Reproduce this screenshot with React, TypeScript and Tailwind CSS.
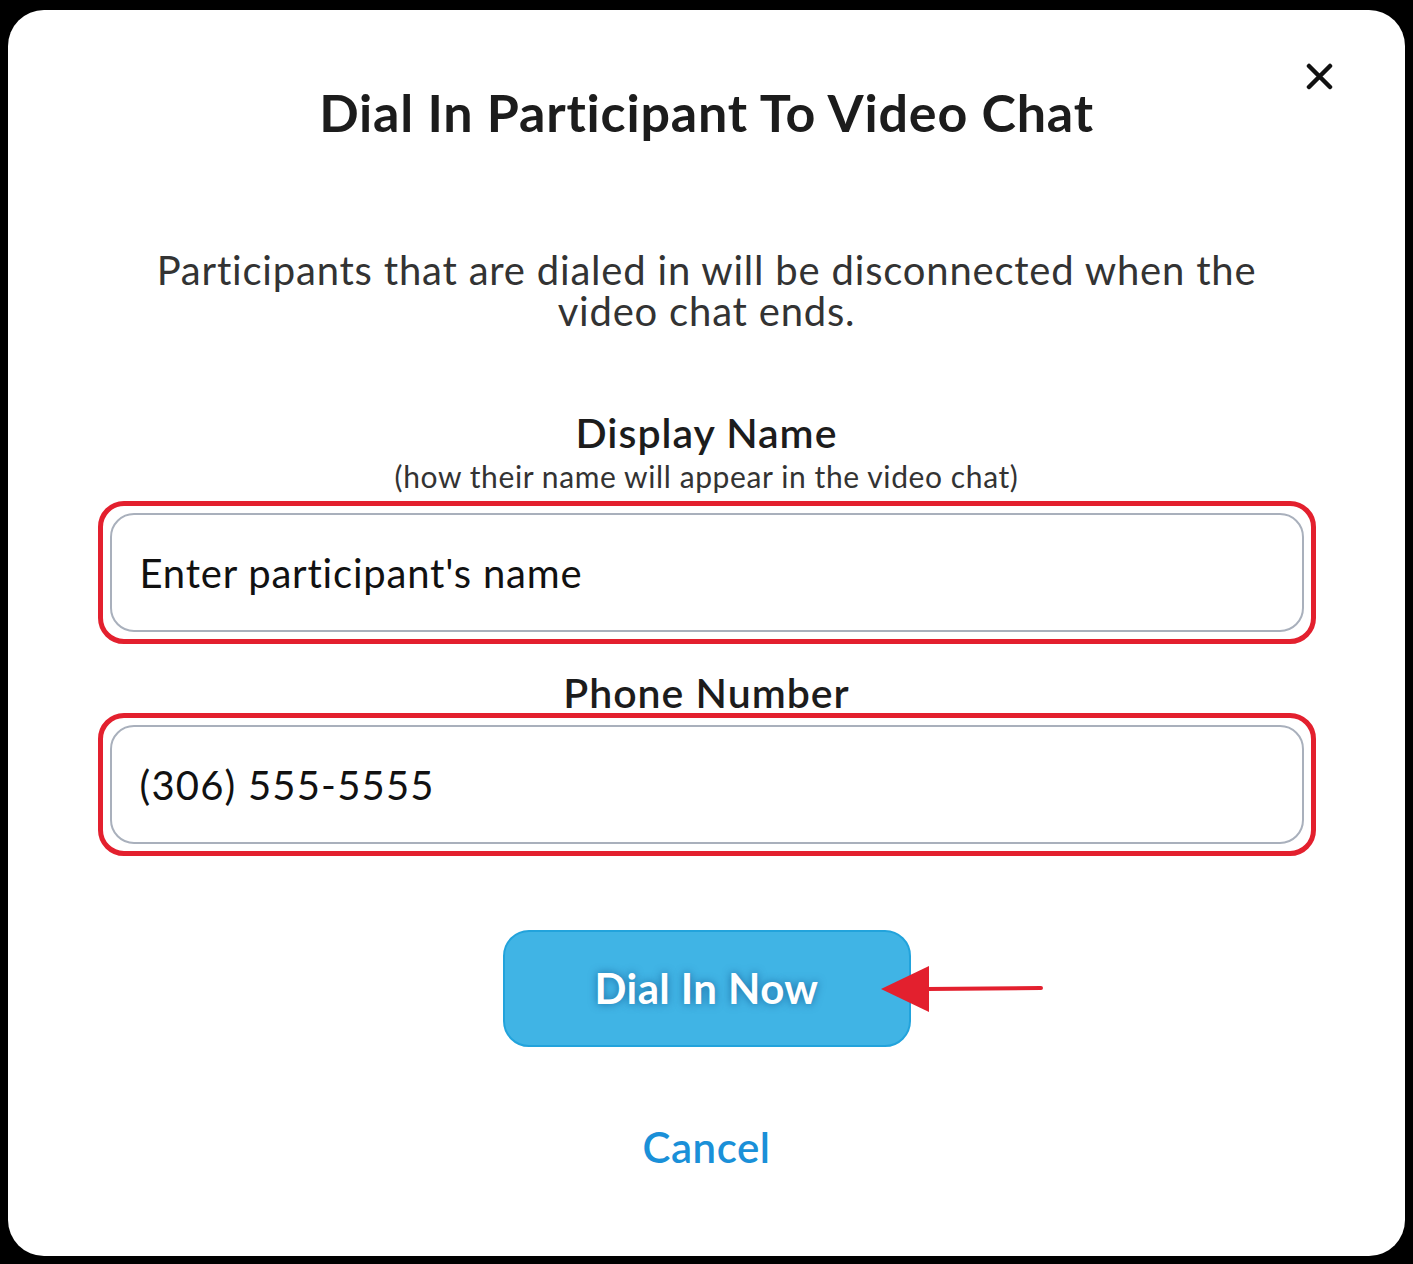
import { useState } from 'react'

const font = { fontFamily: 'Lato, "Open Sans", sans-serif' }

export default function App() {
  const [name, setName] = useState('')
  const [phone, setPhone] = useState('(306) 555-5555')

  return (
    <div className="min-h-[1264px] bg-black px-[8px] pt-[10px] pb-[8px]" style={font}>
      <div className="relative flex h-[1246px] flex-col items-center rounded-[36px] bg-white">
        <button
          aria-label="Close"
          className="absolute top-[53px] right-[72px] flex h-[27px] w-[27px] items-center justify-center"
        >
          <svg width="27" height="27" viewBox="0 0 27 27" fill="none">
            <path
              d="M3 3 L24 24 M24 3 L3 24"
              stroke="#111"
              strokeWidth="4.5"
              strokeLinecap="round"
            />
          </svg>
        </button>

        <h1 className="mt-[76px] text-[52px] leading-none font-bold tracking-[0.8px] text-[#1c1c1c]">
          Dial In Participant To Video Chat
        </h1>

        <p className="mt-[112px] text-center text-[40px] tracking-[0.8px] text-[#333]">
          <span className="block h-[41px] leading-[41px]">
            Participants that are dialed in will be disconnected when the
          </span>
          <span className="block h-[41px] leading-[41px]">video chat ends.</span>
        </p>

        <h2 className="mt-[80px] text-[41px] leading-none font-semibold tracking-[1px] text-[#1c1c1c]">
          Display Name
        </h2>
        <p className="mt-[8px] text-[30px] leading-none tracking-[0.6px] text-[#333]">
          (how their name will appear in the video chat)
        </p>

        <div className="mt-[10px] rounded-[26px] border-[5px] border-[#e3202e] p-[7px]">
          <input
            value={name}
            onChange={(e) => setName(e.target.value)}
            placeholder="Enter participant's name"
            className="h-[119px] w-[1194px] rounded-[24px] border-2 border-[#a9b0bc] bg-white pl-[28px] text-[40px] tracking-[0.8px] text-[#111] outline-none placeholder:text-[#111]"
          />
        </div>

        <h2 className="mt-[28px] text-[41px] leading-none font-semibold tracking-[1px] text-[#1c1c1c]">
          Phone Number
        </h2>

        <div className="mt-[0px] rounded-[26px] border-[5px] border-[#e3202e] p-[7px]">
          <input
            value={phone}
            onChange={(e) => setPhone(e.target.value)}
            className="h-[119px] w-[1194px] rounded-[24px] border-2 border-[#a9b0bc] bg-white pl-[28px] text-[40px] tracking-[1.2px] text-[#111] outline-none"
          />
        </div>

        <div className="relative mt-[74px]">
          <button className="h-[117px] w-[408px] rounded-[26px] border-2 border-[#22a3dc] bg-[#40b4e5] text-[42px] font-bold tracking-[0.4px] text-white [text-shadow:0_0_8px_rgba(0,60,120,0.6)]">
            Dial In Now
          </button>
          <svg
            className="absolute top-[33px] left-[376px]"
            width="168"
            height="52"
            viewBox="0 0 168 52"
            fill="none"
          >
            <path d="M2 26 L50 3 L50 49 Z" fill="#e3202e" />
            <path d="M48 26 L162 25" stroke="#e3202e" strokeWidth="4" strokeLinecap="round" />
          </svg>
        </div>

        <button className="mt-[79px] text-[42px] leading-none font-semibold tracking-[0.5px] text-[#1a90d8]">
          Cancel
        </button>
      </div>
    </div>
  )
}
